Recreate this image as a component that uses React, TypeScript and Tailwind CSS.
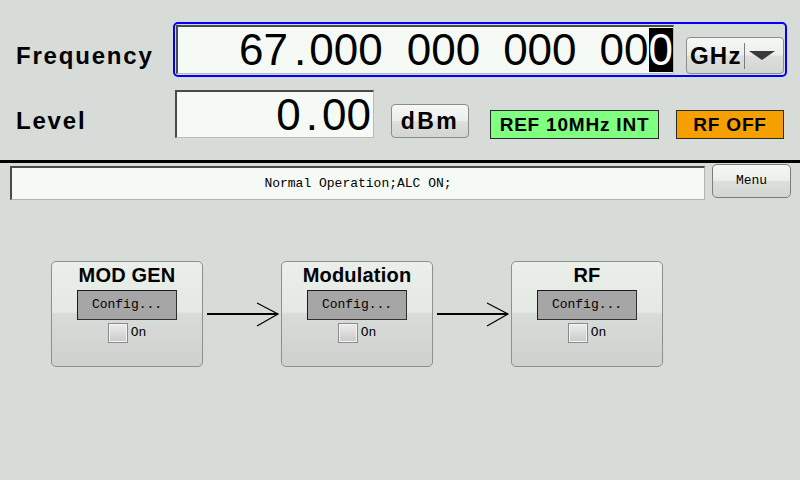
const gloss =
  "bg-[linear-gradient(to_bottom,#f6f8f6_0%,#eceeec_48%,#dcdfdc_52%,#d2d5d2_100%)]";

const Block = ({ title }: { title: string }): JSX.Element => {
  return (
    <div className="w-[152px] h-[106px] rounded-[5px] border border-[#8c8f8c] bg-[linear-gradient(to_bottom,#eaefea_0%,#e4e9e4_48%,#d8dcd8_50%,#ced1ce_100%)] flex flex-col items-center">
      <div className="mt-[3px] text-[20px] leading-none font-bold tracking-[0.2px] text-black">
        {title}
      </div>
      <button className="mt-[5px] w-[100px] h-[30px] bg-[#a6a6a6] border border-t-[#1a1a1a] border-l-[#1a1a1a] border-b-[#303030] border-r-[#303030] font-['Liberation_Mono',monospace] text-[13px] text-black">
        Config...
      </button>
      <div className="mt-[3px] flex items-center gap-[3px]">
        <span className="w-[20px] h-[20px] border border-[#8a8a8a] bg-[linear-gradient(to_bottom,#ececec,#c8cac8)] shadow-[inset_0_0_0_1px_#f4f4f4]"></span>
        <span className="font-['Liberation_Mono',monospace] text-[13px] text-black">On</span>
      </div>
    </div>
  );
};

const Arrow = (): JSX.Element => {
  return (
    <svg width="78" height="106" viewBox="0 0 78 106" className="shrink-0">
      <line x1="4" y1="53" x2="75" y2="53" stroke="#000" strokeWidth="2" />
      <polyline
        points="54,42 75,53 54,65"
        fill="none"
        stroke="#000"
        strokeWidth="1.2"
      />
    </svg>
  );
};

const App = (): JSX.Element => {
  return (
    <div className="w-[800px] h-[480px] overflow-hidden bg-[#d8dcd8] font-['Liberation_Sans',Arial,sans-serif] text-black">
      {/* frequency row */}
      <div className="flex pt-[22px]">
        <div className="w-[173px] pl-[16px] pt-[22px] text-[24px] leading-none font-bold tracking-[1.8px]">
          Frequency
        </div>
        <div className="w-[614px] rounded-[5px] border-2 border-[#0000ff] p-px flex items-end">
          <div className="w-[498px] h-[49px] bg-[#f5faf5] border-t-2 border-l-2 border-t-[#4a4a4a] border-l-[#4a4a4a] border-b border-r border-b-[#b8bcb8] border-r-[#b8bcb8] flex items-center justify-end text-[44px] leading-none">
            <span>67</span>
            <span className="ml-[6px]">.</span>
            <span className="ml-[3px]">000</span>
            <span className="ml-[24px]">000</span>
            <span className="ml-[23px]">000</span>
            <span className="ml-[23px]">00</span>
            <span className="bg-black text-white">0</span>
          </div>
          <div className={`ml-[12px] w-[98px] h-[37px] rounded-[4px] border border-[#8a8d8a] ${gloss} flex items-center`}>
            <span className="ml-[3px] text-[24px] leading-none font-bold tracking-[1.2px]">GHz</span>
            <span className="ml-[2px] w-px h-[26px] bg-[#7a7a7a]"></span>
            <svg width="26" height="9" viewBox="0 0 26 9" className="ml-[4px]">
              <polygon points="0,0 26,0 13,9" fill="#3a3a3a" />
            </svg>
          </div>
        </div>
      </div>

      {/* level row */}
      <div className="flex items-start mt-[13px]">
        <div className="w-[175px] pl-[16px] pt-[19px] text-[24px] leading-none font-bold tracking-[1.8px]">
          Level
        </div>
        <div className="w-[199px] h-[48px] bg-[#f5faf5] border-t-2 border-l-2 border-t-[#4a4a4a] border-l-[#4a4a4a] border-b border-r border-b-[#b8bcb8] border-r-[#b8bcb8] flex items-center justify-end pr-[2px] text-[44px] leading-none">
          <span>0</span>
          <span className="ml-[5px]">.</span>
          <span className="ml-[4px]">00</span>
        </div>
        <div className={`ml-[17px] mt-[14px] w-[78px] h-[34px] rounded-[4px] border border-[#8a8d8a] ${gloss} flex items-center justify-center text-[23px] leading-none font-bold tracking-[2.5px]`}>
          dBm
        </div>
        <div className="ml-[21px] mt-[20px] w-[169px] h-[29px] bg-[#80ff80] border border-[#2a2a2a] flex items-center justify-center text-[19px] leading-none font-bold tracking-[0.8px]">
          REF 10MHz INT
        </div>
        <div className="ml-[17px] mt-[20px] w-[108px] h-[29px] bg-[#f5a000] border border-[#2a2a2a] flex items-center justify-center text-[19px] leading-none font-bold tracking-[0.8px]">
          RF OFF
        </div>
      </div>

      <div className="mt-[21px] h-[3px] bg-black"></div>

      {/* status row */}
      <div className="flex items-start pl-[10px] pt-px">
        <div className="mt-[2px] w-[695px] h-[34px] bg-[#f5faf5] border-t-2 border-l-2 border-t-[#4a4a4a] border-l-[#4a4a4a] border-b border-r border-b-[#b0b4b0] border-r-[#b0b4b0] flex items-center justify-center font-['Liberation_Mono',monospace] text-[13px]">
          Normal Operation;ALC ON;
        </div>
        <div className={`ml-[7px] w-[79px] h-[34px] rounded-[5px] border border-[#7a7d7a] ${gloss} flex items-center justify-center font-['Liberation_Mono',monospace] text-[13px]`}>
          Menu
        </div>
      </div>

      {/* block diagram */}
      <div className="flex pl-[51px] mt-[61px]">
        <Block title="MOD GEN" />
        <Arrow />
        <Block title="Modulation" />
        <Arrow />
        <Block title="RF" />
      </div>
    </div>
  );
};

export default App;
